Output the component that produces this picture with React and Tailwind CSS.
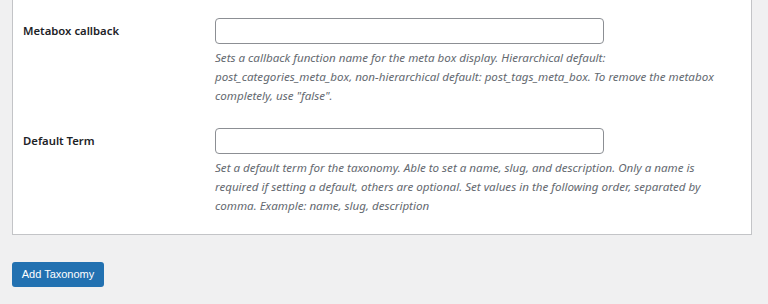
export default function App() {
  const rows = [
    {
      label: 'Metabox callback',
      desc: 'Sets a callback function name for the meta box display. Hierarchical default: post_categories_meta_box, non-hierarchical default: post_tags_meta_box. To remove the metabox completely, use "false".',
    },
    {
      label: 'Default Term',
      desc: 'Set a default term for the taxonomy. Able to set a name, slug, and description. Only a name is required if setting a default, others are optional. Set values in the following order, separated by comma. Example: name, slug, description',
    },
  ];

  return (
    <div className="w-[768px] h-[304px] bg-[#f0f0f1] overflow-hidden font-['Noto_Sans',sans-serif]">
      <div className="mx-[12px] w-[740px] bg-white border-x border-b border-[#c3c4c7] pt-[18px] pb-[19px]">
        {rows.map((row, i) => (
          <div key={row.label} className={`flex ${i > 0 ? 'mt-[23px]' : ''}`}>
            <div className="w-[202px] pl-[10px] pt-[1px] h-[26px] flex items-center text-[11.3px] font-semibold text-[#1d2327]">
              {row.label}
            </div>
            <div className="w-[510px]">
              <input
                type="text"
                className="block w-[389px] h-[26px] border border-[#8c8f94] rounded-[4px] bg-white"
              />
              <p className="mt-[4px] w-[508px] text-[11.6px] leading-[19px] italic text-[#646970]">
                {row.desc}
              </p>
            </div>
          </div>
        ))}
      </div>
      <button className="block mt-[27px] ml-[12px] h-[25px] w-[92px] rounded-[3px] bg-[#2271b1] text-white text-[11px] font-['Liberation_Sans',sans-serif]">
        Add Taxonomy
      </button>
    </div>
  );
}
